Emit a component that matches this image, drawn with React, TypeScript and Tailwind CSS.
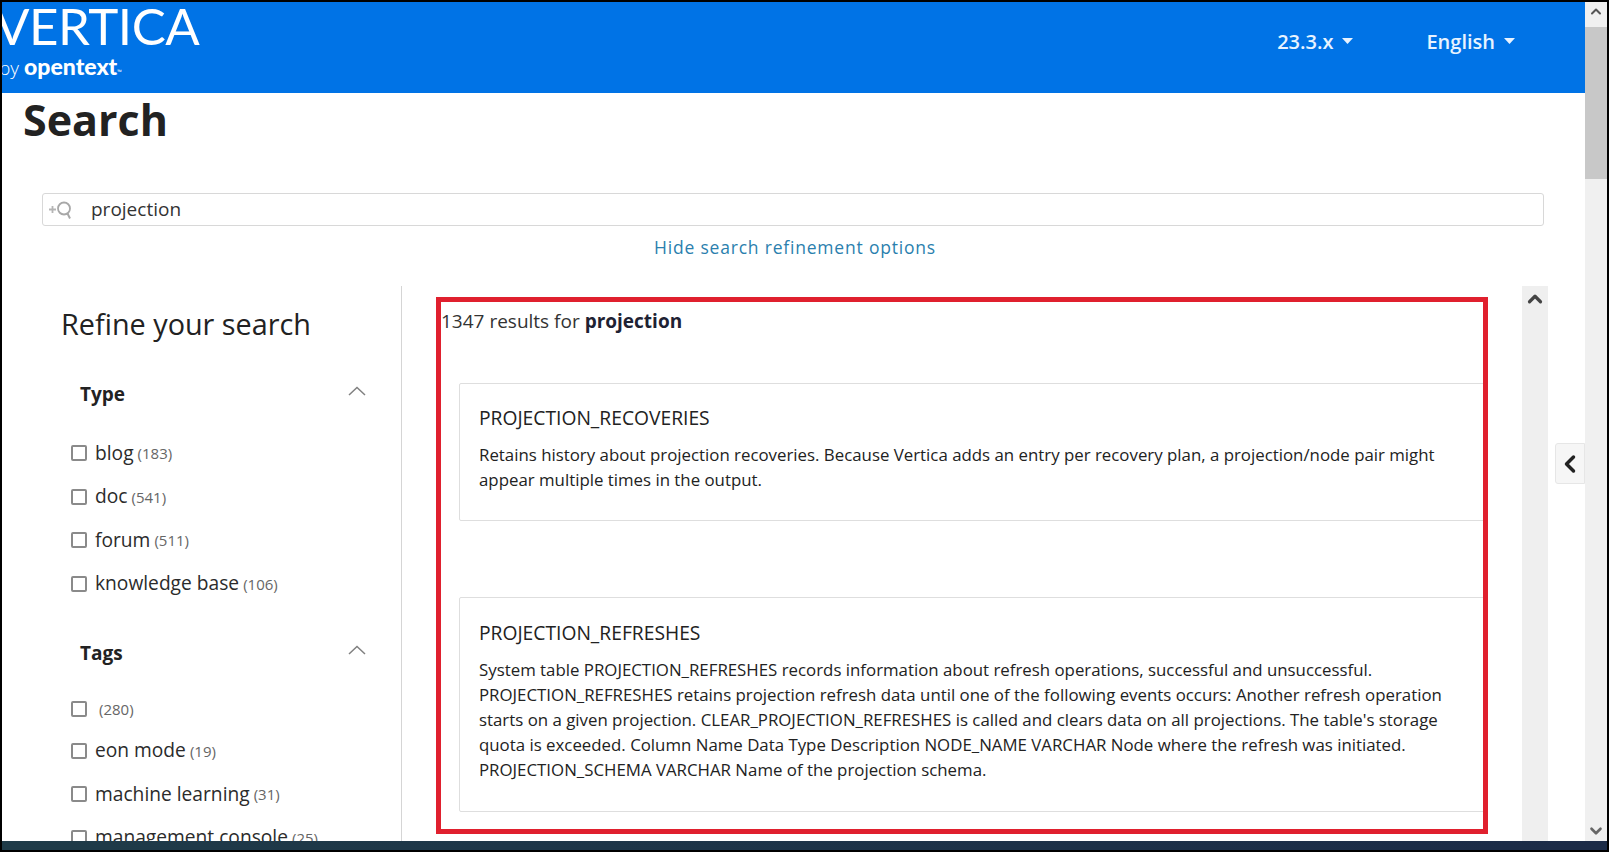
import React from 'react';
import { ChevronLeft, ChevronUp, ChevronDown } from 'lucide-react';

const typeFilters = [
  { label: 'blog', count: 183 },
  { label: 'doc', count: 541 },
  { label: 'forum', count: 511 },
  { label: 'knowledge base', count: 106 },
];

const tagFilters = [
  { label: 'eon mode', count: 19 },
  { label: 'machine learning', count: 31 },
  { label: 'management console', count: 25 },
];

const Caret: React.FC = () => (
  <svg width="11" height="6" viewBox="0 0 11 6" className="ml-[9px] mt-[-2px]">
    <path d="M0 0h11L5.5 6z" fill="#e8f3ff" />
  </svg>
);

const FilterRow: React.FC<{ label: string; count: number }> = ({ label, count }) => (
  <div className="flex items-center h-[43.5px] pl-[69px]">
    <span className="w-4 h-4 rounded-[2px] border-2 border-[#8a8a8a] bg-white shrink-0" />
    <span className="ml-2 text-[19.2px] text-[#2b2b2b]">{label}</span>
    <span className="ml-[4px] text-[15px] text-[#666]">({count})</span>
  </div>
);

const FilterHeading: React.FC<{ title: string }> = ({ title }) => (
  <div className="flex items-center justify-between pl-[78px] pr-[35px]">
    <h3 className="text-[19px] font-bold text-[#222]">{title}</h3>
    <svg width="18" height="10" viewBox="0 0 18 10" className="mt-[-6px]">
      <path d="M1 9l8-7.5L17 9" fill="none" stroke="#808080" strokeWidth="1.5" />
    </svg>
  </div>
);

const ResultCard: React.FC<{ title: string; className: string; children: React.ReactNode }> = ({ title, className, children }) => (
  <div className={`w-[1060px] shrink-0 ml-[18px] border border-[#dedede] rounded-[2px] pl-[19px] pr-[70px] ${className}`}>
    <h2 className="text-[19.25px] leading-[26px] text-[#222]">{title}</h2>
    <p className="mt-[11px] text-[16.84px] leading-[25px] text-[#222]">{children}</p>
  </div>
);

export default function App() {
  return (
    <div
      className="w-[1609px] h-[852px] flex flex-col overflow-hidden border-2 border-black bg-white"
      style={{ fontFamily: '"Open Sans", sans-serif' }}
    >
      <div className="flex flex-1 min-h-0">
        <div className="flex-1 min-w-0 flex flex-col">
          <header className="h-[91px] shrink-0 bg-[#0073e6] flex items-start justify-between overflow-hidden">
            <div className="text-white">
              <div
                className="ml-[-7px] mt-[-1px] text-[51px] leading-[50px] tracking-[-0.5px]"
                style={{ fontFamily: 'Lato, sans-serif' }}
              >
                VERTICA
              </div>
              <div className="mt-[2px] ml-[-3px] flex items-baseline text-[19px] leading-[26px]">
                <span className="font-light">by</span>
                <span className="ml-[5px] text-[23px] font-black" style={{ fontFamily: 'Lato, sans-serif' }}>opentext</span>
                <span className="text-[6px] self-start mt-[6px]">™</span>
              </div>
            </div>
            <div className="flex items-center h-[80px] text-[20px] font-semibold text-[#e8f3ff]">
              <span>23.3.x</span>
              <Caret />
              <span className="ml-[73px]">English</span>
              <Caret />
              <span className="w-[70px]" />
            </div>
          </header>

          <main className="flex-1 min-h-0 flex flex-col">
            <h1 className="pl-[21px] pt-[1px] text-[43px] leading-[52px] font-bold text-[#222]">Search</h1>

            <div className="mt-[47px] ml-[40px] mr-[41px] h-[33px] flex items-center border border-[#d8d8d8] rounded-[3px]">
              <svg width="26" height="20" viewBox="0 0 26 20" className="ml-[5px]">
                <path d="M1 9.5h7M4.500 6v7" stroke="#b5b5b5" strokeWidth="1.800" />
                <circle cx="16" cy="8.500" r="6" fill="none" stroke="#a8a8a8" strokeWidth="1.800" />
                <path d="M19.500 13.500l2.500 5" stroke="#a8a8a8" strokeWidth="2" />
              </svg>
              <span className="ml-[17px] text-[19px] text-[#333]">projection</span>
            </div>

            <div className="mt-[8px] h-[26px] text-center text-[17.5px] leading-[26px] tracking-[0.8px] text-[#2b7fae] pl-[3px]">
              Hide search refinement options
            </div>

            <div className="mt-[26px] flex-1 min-h-0 flex">
              <aside className="w-[400px] shrink-0 border-r border-[#d5d5d5] overflow-hidden">
                <h2 className="mt-[19px] pl-[59px] text-[28.8px] leading-[38px] text-[#222]">Refine your search</h2>
                <div className="mt-[37px]">
                  <FilterHeading title="Type" />
                </div>
                <div className="mt-[23px]">
                  {typeFilters.map((f) => (
                    <FilterRow key={f.label} label={f.label} count={f.count} />
                  ))}
                </div>
                <div className="mt-[33px]">
                  <FilterHeading title="Tags" />
                </div>
                <div className="mt-[22.5px] flex items-center h-[39.5px] pl-[69px]">
                  <span className="w-4 h-4 rounded-[2px] border-2 border-[#8a8a8a]" />
                  <span className="ml-[12px] text-[15px] text-[#666]">(280)</span>
                </div>
                {tagFilters.map((f) => (
                  <FilterRow key={f.label} label={f.label} count={f.count} />
                ))}
              </aside>

              <section className="w-[1052px] h-[537px] ml-[34px] mt-[11px] shrink-0 border-[5px] border-[#e0202e] overflow-hidden flex flex-col">
                <p className="mt-[7px] text-[19px] leading-[24px] text-[#333]">
                  1347 results for <b className="text-[#1e2233]">projection</b>
                </p>
                <ResultCard title="PROJECTION_RECOVERIES" className="mt-[50px] h-[138px] pt-[21px]">
                  Retains history about projection recoveries. Because Vertica adds an entry per recovery plan, a projection/node pair might appear multiple times in the output.
                </ResultCard>
                <ResultCard title="PROJECTION_REFRESHES" className="mt-[76px] h-[215px] pt-[22px]">
                  System table PROJECTION_REFRESHES records information about refresh operations, successful and unsuccessful. PROJECTION_REFRESHES retains projection refresh data until one of the following events occurs: Another refresh operation starts on a given projection. CLEAR_PROJECTION_REFRESHES is called and clears data on all projections. The table's storage quota is exceeded. Column Name Data Type Description NODE_NAME VARCHAR Node where the refresh was initiated. PROJECTION_SCHEMA VARCHAR Name of the projection schema.
                </ResultCard>
              </section>

              <div className="ml-[34px] w-[26px] shrink-0 bg-[#efefef] flex justify-center pt-[2px]">
                <ChevronUp size={22} strokeWidth={3.500} className="text-[#444]" />
              </div>

              <div className="ml-[7px] mt-[157px] w-[30px] h-[41px] bg-[#f6f6f6] border border-[#e6e6e6] rounded-l-[3px] flex items-center justify-center">
                <ChevronLeft size={28} strokeWidth={3} className="text-[#222]" />
              </div>
            </div>
          </main>
        </div>

        <div className="w-[22px] shrink-0 bg-[#f0f0f0] flex flex-col items-center">
          <ChevronUp size={16} strokeWidth={3} className="text-[#555] mt-[-6px] h-[31px] shrink-0" />
          <div className="w-full h-[152px] bg-[#c8c8c8]" />
          <ChevronDown size={18} strokeWidth={3.500} className="text-[#666] mt-auto mb-[1px]" />
        </div>
      </div>
      <footer className="h-[9px] shrink-0 bg-gradient-to-r from-[#1f3b48] to-[#1c2b47]" />
    </div>
  );
}
